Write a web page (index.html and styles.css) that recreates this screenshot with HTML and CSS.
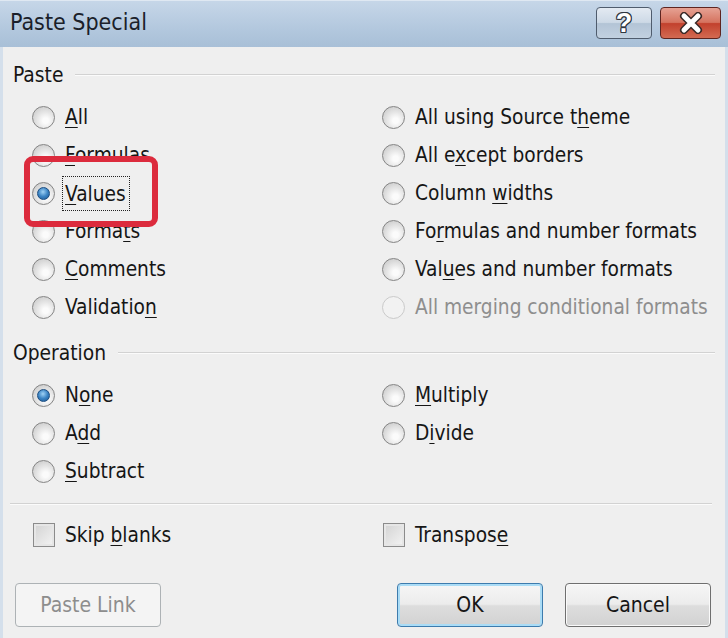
FILE: index.html
```html
<!DOCTYPE html>
<html lang="en">
<head>
    <meta charset="UTF-8">
    <title>Paste Special</title>
    <link rel="stylesheet" href="styles.css">
</head>
<body>

    <div class="window">

        <!-- Title bar -->
        <div class="titlebar">
            <div class="title">Paste Special</div>
            <div class="caption-buttons">
                <div class="cap-btn help">?</div>
                <div class="cap-btn close">
                    <svg width="26" height="22" viewBox="0 0 26 22">
                        <path d="M6 4 L20 18 M20 4 L6 18" stroke="#3a2a28" stroke-width="8" stroke-linecap="round"/>
                        <path d="M6 4 L20 18 M20 4 L6 18" stroke="#fff" stroke-width="5" stroke-linecap="round"/>
                    </svg>
                </div>
            </div>
        </div>

        <div class="client">

            <!-- Paste -->
            <div class="group-head"><span>Paste</span><div class="rule"></div></div>
            <div class="options">
                <div class="opt"><span class="radio"></span><span><u>A</u>ll</span></div>
                <div class="opt"><span class="radio"></span><span>All using Source t<u>h</u>eme</span></div>
                <div class="opt"><span class="radio"></span><span><u>F</u>ormulas</span></div>
                <div class="opt"><span class="radio"></span><span>All e<u>x</u>cept borders</span></div>
                <div class="opt"><span class="radio checked"></span><span class="focus"><u>V</u>alues</span></div>
                <div class="opt"><span class="radio"></span><span>Column <u>w</u>idths</span></div>
                <div class="opt"><span class="radio"></span><span>Forma<u>t</u>s</span></div>
                <div class="opt"><span class="radio"></span><span>Fo<u>r</u>mulas and number formats</span></div>
                <div class="opt"><span class="radio"></span><span><u>C</u>omments</span></div>
                <div class="opt"><span class="radio"></span><span>Val<u>u</u>es and number formats</span></div>
                <div class="opt"><span class="radio"></span><span>Validatio<u>n</u></span></div>
                <div class="opt disabled"><span class="radio"></span><span>All merging conditional formats</span></div>
            </div>

            <!-- Operation -->
            <div class="group-head op-head"><span>Operation</span><div class="rule"></div></div>
            <div class="options">
                <div class="opt"><span class="radio checked"></span><span>N<u>o</u>ne</span></div>
                <div class="opt"><span class="radio"></span><span><u>M</u>ultiply</span></div>
                <div class="opt"><span class="radio"></span><span>A<u>d</u>d</span></div>
                <div class="opt"><span class="radio"></span><span>D<u>i</u>vide</span></div>
                <div class="opt"><span class="radio"></span><span><u>S</u>ubtract</span></div>
            </div>

            <div class="divider"></div>

            <div class="options checks">
                <div class="opt"><span class="checkbox"></span><span>Skip <u>b</u>lanks</span></div>
                <div class="opt"><span class="checkbox"></span><span>Transpos<u>e</u></span></div>
            </div>

            <!-- Buttons -->
            <div class="buttons">
                <div class="btn disabled">Paste Link</div>
                <div class="btn-group">
                    <div class="btn default">OK</div>
                    <div class="btn">Cancel</div>
                </div>
            </div>

            <!-- red annotation box drawn over the dialog -->
            <div class="highlight"></div>
        </div>
    </div>

</body>
</html>
```

FILE: styles.css
```css
body {
    margin: 0;
    padding: 0;
    background-color: #efefef;
    font-family: "DejaVu Sans Condensed", "Liberation Sans", sans-serif;
    color: #161616;
}

.window {
    width: 728px;
    height: 638px;
    overflow: hidden;
    background-color: #efefef;
}

/* Title bar */
.titlebar {
    height: 47px;
    display: flex;
    justify-content: space-between;
    align-items: flex-start;
    background: linear-gradient(#c6d6e8, #b3c8de 60%, #a8bfd7);
    border-top: 1px solid #dfe8f2;
    box-sizing: border-box;
}

.title {
    padding-left: 10px;
    padding-top: 8px;
    font-size: 23px;
    color: #1b1f2a;
}

.caption-buttons {
    display: flex;
    gap: 8px;
    padding-top: 6px;
    padding-right: 7px;
}

.cap-btn {
    height: 32px;
    box-sizing: border-box;
    border-radius: 4px;
    display: flex;
    justify-content: center;
    align-items: center;
}

.help {
    width: 56px;
    border: 1px solid #4f5c6d;
    background: linear-gradient(#e3eaf2, #cdd9e6 48%, #b3c4d6 52%, #c2d1e0);
    color: #fff;
    font-family: "Liberation Sans", sans-serif;
    font-weight: bold;
    font-size: 27px;
    text-shadow: 1px 0 0 #2e3640, -1px 0 0 #2e3640, 0 1px 0 #2e3640, 0 -1px 0 #2e3640,
                 1px 1px 0 #2e3640, -1px -1px 0 #2e3640, 1px -1px 0 #2e3640, -1px 1px 0 #2e3640;
}

.close {
    width: 61px;
    border: 1px solid #5e2520;
    background: linear-gradient(#e6a294, #d5735f 48%, #c2412d 52%, #d36a52);
}

/* Dialog body */
.client {
    position: relative;
    height: 591px;
    border-left: 3px solid #d4dfeb;
    border-right: 3px solid #d4dfeb;
    background-color: #efefef;
}

.group-head {
    display: flex;
    align-items: center;
    gap: 12px;
    height: 30px;
    padding: 13px 10px 0 10px;
    font-size: 20.8px;
}

.op-head {
    padding-top: 12px;
}

.rule {
    flex: 1;
    border-top: 1px solid #d2d2d2;
    border-bottom: 1px solid #fbfbfb;
}

.options {
    display: grid;
    grid-template-columns: 350px 1fr;
    grid-auto-rows: 38px;
    padding-left: 30px;
    margin-top: 8px;
}

.opt {
    display: flex;
    align-items: center;
    gap: 10px;
    font-size: 20.7px;
}

.opt u {
    text-decoration-thickness: 1px;
    text-underline-offset: 3px;
}

.opt.disabled {
    color: #8e8e8e;
}

.radio {
    width: 23px;
    height: 23px;
    box-sizing: border-box;
    border-radius: 50%;
    border: 1px solid #858585;
    background: radial-gradient(circle at 60% 65%, #fbfbfb 15%, #d8d8d8 65%, #c2c2c2);
    display: flex;
    justify-content: center;
    align-items: center;
    flex-shrink: 0;
    margin-left: -1px;
}

.disabled .radio {
    border-color: #cacaca;
    background: #f2f2f2;
}

.radio.checked::after {
    content: "";
    width: 11px;
    height: 11px;
    border-radius: 50%;
    border: 1px solid #1c4d80;
    background: radial-gradient(circle at 45% 35%, #9fd2f5, #3b84c4 50%, #1b5590);
}

.focus {
    border: 1px dotted #222;
    padding: 5px 3px 4px 2px;
    margin-left: -3px;
}

.divider {
    margin: 13px 13px 0 7px;
    border-top: 1px solid #d2d2d2;
    border-bottom: 1px solid #fbfbfb;
}

.checks {
    margin-top: 11px;
}

.checkbox {
    width: 22px;
    height: 24px;
    box-sizing: border-box;
    border: 1px solid #8b8b8b;
    background: linear-gradient(135deg, #d2d2d2, #f4f4f4);
    box-shadow: inset 0 0 0 2px #e6e6e6;
    flex-shrink: 0;
}

/* Buttons */
.buttons {
    display: flex;
    justify-content: space-between;
    margin-top: 29px;
    padding: 0 14px 0 12px;
}

.btn-group {
    display: flex;
    gap: 22px;
}

.btn {
    width: 146px;
    height: 44px;
    box-sizing: border-box;
    border: 1px solid #6f6f6f;
    border-radius: 4px;
    background: linear-gradient(#f6f6f6, #ececec 48%, #dddddd 52%, #d2d2d2);
    box-shadow: inset 0 0 0 1px #fafafa;
    display: flex;
    justify-content: center;
    align-items: center;
    font-size: 21px;
}

.btn.default {
    border-color: #3d7bad;
    box-shadow: inset 0 0 0 2px #aadcf6;
}

.btn.disabled {
    border-color: #adb2b5;
    background: #f4f4f4;
    box-shadow: none;
    color: #8d8d8d;
}

.highlight {
    position: absolute;
    left: 21px;
    top: 109px;
    width: 134px;
    height: 71px;
    box-sizing: border-box;
    border: 6px solid #dc2b3d;
    border-radius: 9px;
}
```
